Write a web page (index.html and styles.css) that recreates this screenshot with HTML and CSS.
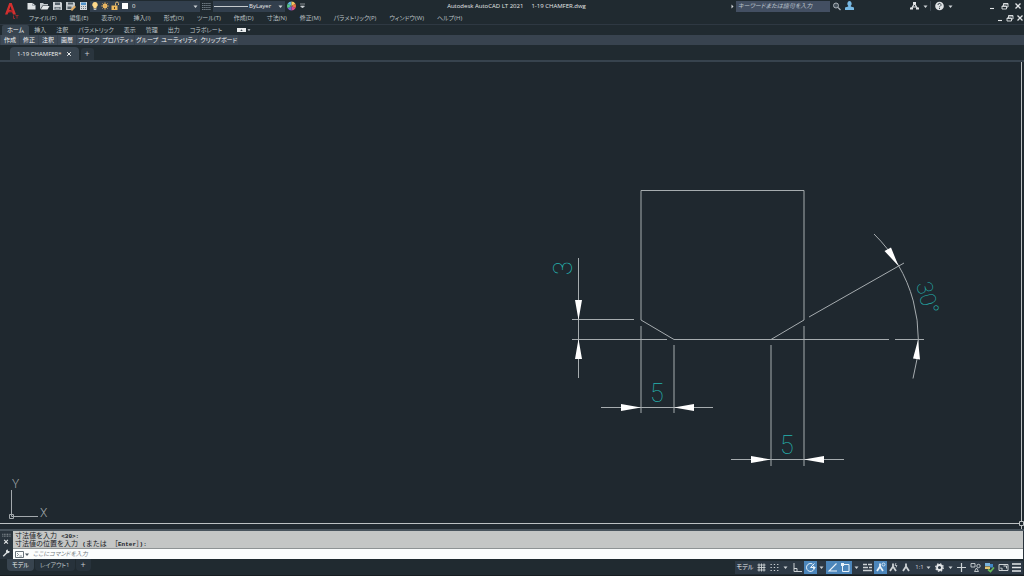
FILE: index.html
```html
<!DOCTYPE html>
<html lang="ja">
<head>
<meta charset="utf-8">
<title>Autodesk AutoCAD LT 2021 1-19 CHAMFER.dwg</title>
<link rel="stylesheet" href="styles.css">
</head>
<body class="app">
<svg class="defs" aria-hidden="true">
  <symbol id="caret" viewBox="0 0 5 5"><path d="M0.5 1.5h4L2.5 4z" fill="currentColor"/></symbol>
  <symbol id="min" viewBox="0 0 8 8"><path d="M2 6.500h4" stroke="currentColor" stroke-width="1.100"/></symbol>
  <symbol id="restore" viewBox="0 0 8 8"><path d="M1 4h4.500v3H1zM2.500 4V1.500h4.500v3.500H5.500M2.500 2h4.500M1 4.400h4.500" fill="none" stroke="currentColor" stroke-width=".9"/></symbol>
  <symbol id="close" viewBox="0 0 8 8"><path d="M1.500 1.500l5 5M6.500 1.500l-5 5" stroke="currentColor" stroke-width="1.300"/></symbol>
  <symbol id="anno" viewBox="0 0 10 10"><path d="M5 1.500v4M5 4.500L2 9M5 4.500L8 9" fill="none" stroke="currentColor" stroke-width="1.800"/></symbol>
</svg>

<header class="header">
  <button class="logo" aria-label="アプリケーションメニュー">
    <svg viewBox="0 0 24 24"><path d="M5 14.500L9.300 3h2.400L16 14.500h-3l-.8-2.300H8.500L7.500 14.500zM9.200 10h2.500L10.500 6z" fill="#d3302f" fill-rule="evenodd"/><path d="M5 14.500l7-5 1 2-5 1z" fill="#a81f24"/><path d="M13.500 15.500v3h1.500M15.500 15.500h3M17 15.500v3" fill="none" stroke="#a32a2e" stroke-width=".9"/></svg>
  </button>
  <div class="header-rows">
    <div class="title-row">
      <div class="quick">
        <button class="tool" aria-label="新規作成"><svg viewBox="0 0 13 12"><path d="M2.500 3h5l3 2.500V9.500h-8z" fill="#dfe3e5"/><path d="M7.500 3v2.500h3" fill="none" stroke="#8b949b" stroke-width=".7"/></svg></button>
        <button class="tool" aria-label="開く"><svg viewBox="0 0 13 12"><path d="M2 9.500V3h3l1 1h4v1.500H4.500z" fill="#c5cacd"/><path d="M4.800 6h6.700L9.500 9.500H2.800z" fill="#e5e8e9"/></svg></button>
        <button class="tool" aria-label="上書き保存"><svg viewBox="0 0 13 12"><path d="M2 2h8l1 1v7H2z" fill="#cdd2d5"/><path d="M4 2.500h5v2.500H4zM3.500 7h6v2.500h-6z" fill="#56626b"/><path d="M4.500 8.200h4" stroke="#cdd2d5"/></svg></button>
        <button class="tool" aria-label="名前を付けて保存"><svg viewBox="0 0 13 12"><path d="M2 2h8l1 1v4L8 10H2z" fill="#c2c8cb"/><path d="M4 2.500h5v2H4zM3.500 6.500h4v2.500h-4z" fill="#56626b"/><path d="M6.500 9.500l4-4 1.500 1.500-4 4z" fill="#e0ab62"/></svg></button>
        <button class="tool" aria-label="印刷"><svg viewBox="0 0 13 12"><path d="M3 2h7v8H3z" fill="#d4d9dc"/><path d="M4 2.500h5v2.500H4z" fill="#4f92c9"/><path d="M4 6.500h5M4 8.500h5" stroke="#6b7780" stroke-dasharray="1 1"/></svg></button>
      </div>
      <label class="combo combo-layer">
        <svg class="ic10" viewBox="0 0 10 12"><path d="M5 2a2.700 2.700 0 0 1 1.500 5v1.500h-3V7A2.700 2.700 0 0 1 5 2z" fill="#ffd98a"/><path d="M3.700 9.400h2.600" stroke="#b8bdc1" stroke-width="1.200"/></svg>
        <svg class="ic10" viewBox="0 0 10 12"><circle cx="5" cy="6" r="2.400" fill="#f5c268"/><path d="M5 2v8M1 6h8M2.200 3.200l5.600 5.600M7.800 3.200L2.200 8.800" stroke="#dcab5c" stroke-width=".7"/></svg>
        <svg class="ic10" viewBox="0 0 10 12"><path d="M1.500 5.500h6V10h-6z" fill="#eeb95c"/><path d="M5.500 5.500V3.500a1.500 1.500 0 0 1 3 0V5" fill="none" stroke="#e5bd76"/><path d="M4.500 7v2" stroke="#5a4a2c"/></svg>
        <svg class="ic10" viewBox="0 0 10 12"><path d="M2 3h6v6H2z" fill="#fff"/></svg>
        <select class="select" aria-label="画層"><option>0</option></select>
        <svg class="caret"><use href="#caret"/></svg>
      </label>
      <button class="tool" aria-label="線種"><svg viewBox="0 0 13 12"><path d="M2 3.500h9M2 5.500h9M2 7.500h9M2 9.500h9" stroke="#707c85" stroke-dasharray="1.500 .6"/></svg></button>
      <label class="combo combo-line">
        <span class="line-sample"></span>
        <select class="select" aria-label="線種の選択"><option>ByLayer</option></select>
        <svg class="caret"><use href="#caret"/></svg>
      </label>
      <button class="tool" aria-label="色"><svg viewBox="0 0 13 12"><path d="M6.500 6V1.500A4.500 4.500 0 0 0 2.600 3.800z" fill="#5fb4dd"/><path d="M6.500 6V1.500a4.500 4.500 0 0 1 3.900 2.300z" fill="#f2c45b"/><path d="M6.500 6l3.900-2.200a4.500 4.500 0 0 1 0 4.500z" fill="#ec7147"/><path d="M6.500 6l3.900 2.300a4.500 4.500 0 0 1-3.900 2.200z" fill="#d94d8c"/><path d="M6.500 6v4.500a4.500 4.500 0 0 1-3.900-2.200z" fill="#7563cf"/><path d="M6.500 6L2.600 8.300a4.500 4.500 0 0 1 0-4.500z" fill="#56c48c"/></svg></button>
      <button class="tool tool-narrow" aria-label="カスタマイズ"><svg viewBox="0 0 9 12"><path d="M2 4h5M2.500 6h4L4.500 8z" fill="#cdd2d5" stroke="#cdd2d5" stroke-width=".6"/></svg></button>
      <h1 class="title"><span>Autodesk AutoCAD LT 2021</span><span>1-19 CHAMFER.dwg</span></h1>
      <div class="search">
        <svg class="caret"><path d="M1.500 .5v4l2-2z" fill="#d5d9db"/></svg>
        <input class="search-box" type="search" aria-label="検索" placeholder="キーワードまたは語句を入力">
        <button class="tool" aria-label="検索実行"><svg viewBox="0 0 13 12"><circle cx="6" cy="5.500" r="2.500" fill="#46525b" stroke="#aab2b7"/><path d="M8 7.500l2.500 2.500" stroke="#aab2b7" stroke-width="1.200"/></svg></button>
        <button class="tool" aria-label="サインイン"><svg viewBox="0 0 13 12"><path d="M6.500 1a2.400 2.700 0 0 1 1.300 4.800v.8l3.200 1V10H2V7.600l3.200-1v-.8A2.400 2.700 0 0 1 6.500 1z" fill="#78b9e4"/></svg></button>
      </div>
      <div class="help">
        <button class="tool" aria-label="App Store"><svg viewBox="0 0 13 12"><path d="M6.500 3.500L3.500 8.500M6.500 3.500l3 5M4.500 7h4" fill="none" stroke="#e1e4e6" stroke-width="1.200"/><path d="M5 2h3v2.500H5zM2 7.500h3v2H2zM8 7.500h3v2H8z" fill="#e1e4e6"/></svg></button>
        <svg class="caret"><use href="#caret"/></svg>
        <span class="divider"></span>
        <button class="tool" aria-label="ヘルプ"><svg viewBox="0 0 13 12"><circle cx="6.500" cy="6" r="4.300" fill="#dfe3e5"/><path d="M5 5a1.500 1.500 0 1 1 2.200 1.200c-.6.300-.7.500-.7 1M6.500 8v1" fill="none" stroke="#3b464e"/></svg></button>
        <svg class="caret"><use href="#caret"/></svg>
      </div>
      <div class="window-buttons">
        <button class="tool" aria-label="最小化"><svg class="ic8"><use href="#min"/></svg></button>
        <button class="tool" aria-label="元に戻す"><svg class="ic8"><use href="#restore"/></svg></button>
        <button class="tool" aria-label="閉じる"><svg class="ic8"><use href="#close"/></svg></button>
      </div>
    </div>
    <div class="menu-row">
      <nav class="menu" aria-label="メニュー">
        <button>ファイル(F)</button><button>編集(E)</button><button>表示(V)</button><button>挿入(I)</button><button>形式(O)</button><button>ツール(T)</button><button>作成(D)</button><button>寸法(N)</button><button>修正(M)</button><button>パラメトリック(P)</button><button>ウィンドウ(W)</button><button>ヘルプ(H)</button>
      </nav>
      <div class="doc-buttons">
        <button aria-label="図面を最小化"><svg class="ic8"><use href="#min"/></svg></button>
        <button aria-label="図面を元に戻す"><svg class="ic8"><use href="#restore"/></svg></button>
        <button aria-label="図面を閉じる"><svg class="ic8"><use href="#close"/></svg></button>
      </div>
    </div>
  </div>
</header>

<nav class="ribbon-tabs" aria-label="リボン">
  <button class="active">ホーム</button><button>挿入</button><button>注釈</button><button>パラメトリック</button><button>表示</button><button>管理</button><button>出力</button><button>コラボレート</button>
  <button class="ribbon-toggle" aria-label="リボンの最小化"><svg viewBox="0 0 14 8"><path d="M0 2h9v4H0z" fill="#e8ebec"/><path d="M3.300 5h2.400L4.500 3.300z" fill="#38444f"/><path d="M10.500 3.300h3L12 5z" fill="#cdd2d5"/></svg></button>
</nav>
<nav class="panels" aria-label="パネル">
  <button>作成</button><button>修正</button><button>注釈</button><button>画層</button><button class="kana">ブロック</button><button class="kana">プロパティ <span class="arrow">»</span></button><button class="kana">グループ</button><button class="kana">ユーティリティ</button><button class="kana">クリップボード</button>
</nav>

<div class="doc-tabs">
  <button class="doc-tab">1-19 CHAMFER* <svg class="ic6" viewBox="0 0 8 8"><use href="#close"/></svg></button>
  <button class="add doc-add" aria-label="新規図面">+</button>
</div>

<main class="canvas">
  <svg class="drawing" viewBox="0 62 1024 467" role="img" aria-label="面取り図面">
    <g class="edge">
      <path d="M641 320V190.500H804V320L771 339.500H674L641 320"/>
      <path d="M572 319.500H634M572 339.500H667M771 339.500H889M895 339.500H924M809 317L904 263"/>
      <path d="M578.500 258V378M641 326V413M674 345V413M601 407.500H713"/>
      <path d="M771 345V466M804 326V466M731 459.500H844"/>
      <path d="M874 234A147 147 0 0 1 913 378.500"/>
    </g>
    <g class="arrowheads">
      <path d="M575 300h7l-3.500 20zM575 359h7l-3.500-20z"/>
      <path d="M621 404v7l20-3.500zM694 404v7l-20-3.500z"/>
      <path d="M751 456v7l20-3.500zM824 456v7l-20-3.500z"/>
      <path d="M884.500 251l6.500-3.500 7.500 18.500zM913 358.500l7 1-2-19.500z"/>
    </g>
    <g class="dims">
      <text transform="translate(572 275) rotate(-90)">3</text>
      <text x="650" y="402">5</text>
      <text x="780" y="454">5</text>
      <text class="angle" transform="translate(916 284) rotate(75)">30°</text>
    </g>
    <g class="ucs">
      <path d="M11.500 490V516.500H38M9.500 514.500h4v4h-4z"/>
      <text x="12" y="488">Y</text>
      <text x="40" y="517">X</text>
    </g>
    <path class="crosshair" d="M0 523.500H1019M1021.500 62V521M1021.500 526V529M1019.500 521.500h4v4h-4z"/>
  </svg>
</main>

<section class="command" aria-label="コマンドライン">
  <div class="command-side">
    <svg viewBox="0 0 13 30"><path d="M2 3.500h9M2 5.500h9" stroke="#9ba3a8" stroke-dasharray="1 .7"/><path d="M4 9.500l4 4M8 9.500l-4 4" stroke="#e6e9ea" stroke-width="1.200"/><path d="M3 27l4-4" stroke="#dfe3e5" stroke-width="1.500"/><path d="M9.800 21.300A2 2 0 1 1 8 19.800V21.500z" fill="#dfe3e5"/></svg>
  </div>
  <div class="command-main">
    <div class="history"><p>寸法値を入力 <code>&lt;30&gt;:</code></p><p>寸法値の位置を入力 <code>(</code>または ［<code>Enter</code>］<code>):</code></p></div>
    <label class="prompt">
      <svg class="prompt-icon" viewBox="0 0 18 9"><path d="M2.500 1.500h8v6h-8z" fill="none" stroke="#68737b"/><path d="M4 3l1.500 1.500L4 6M6.500 6h2.500" fill="none" stroke="#68737b" stroke-width=".8"/><path d="M12 3.500h4L14 6z" fill="#4c565e"/></svg>
      <input class="prompt-box" type="text" aria-label="コマンド" placeholder="ここにコマンドを入力">
    </label>
  </div>
</section>

<footer class="footer">
  <nav class="layouts" aria-label="レイアウト"><button class="active">モデル</button><button>レイアウト1</button><button class="add" aria-label="レイアウトを追加">+</button></nav>
  <div class="status">
    <button class="w20 space">モデル</button>
    <button aria-label="グリッド"><svg viewBox="0 0 13 13"><path d="M4 2.500v8M6.500 2.500v8M9 2.500v8M2.500 4h8M2.500 6.500h8M2.500 9h8" stroke="currentColor" stroke-width=".9"/></svg></button>
    <button aria-label="スナップ"><svg viewBox="0 0 13 13"><path d="M2.500 3.500h8M2.500 6.500h8M2.500 9.500h8" stroke="currentColor" stroke-width="1.200" stroke-dasharray="1.300 2"/></svg></button>
    <button class="w9" aria-label="スナップ設定"><svg class="caret"><use href="#caret"/></svg></button>
    <button class="w14" aria-label="直交モード"><svg viewBox="0 0 13 13"><path d="M3 2v8.500h8M3 7.500h3v3" fill="none" stroke="currentColor"/></svg></button>
    <button class="on" aria-label="極トラッキング"><svg viewBox="0 0 13 13"><path d="M10.500 6.500a4 4 0 1 1-2-3.500M6.500 6.500h5M6.500 6.500l4-4M9 8l2-1.500L9 5" fill="none" stroke="currentColor"/></svg></button>
    <button class="w9" aria-label="極トラッキング設定"><svg class="caret"><use href="#caret"/></svg></button>
    <button class="on" aria-label="オブジェクト スナップ トラッキング"><svg viewBox="0 0 13 13"><path d="M10.500 2.500L3 10h8" fill="none" stroke="currentColor" stroke-width="1.100"/></svg></button>
    <button class="on" aria-label="オブジェクト スナップ"><svg viewBox="0 0 13 13"><path d="M3.500 3.500h6.500v7H3.500z" fill="none" stroke="currentColor"/><path d="M2 2h3v3H2z" fill="currentColor"/></svg></button>
    <button class="w9" aria-label="オブジェクト スナップ設定"><svg class="caret"><use href="#caret"/></svg></button>
    <button aria-label="線の太さ"><svg viewBox="0 0 13 13"><path d="M2 3.500h4M7 3.500h4M2 6.500h5M8 6.500h3M2 9.500h9" stroke="currentColor" stroke-width="1.700"/></svg></button>
    <button class="on" aria-label="注釈オブジェクト"><svg viewBox="0 0 13 13"><use href="#anno" x="1" y="1" width="10" height="10"/><circle cx="9.500" cy="3.500" r="1.500" fill="none" stroke="currentColor" stroke-width=".8"/></svg></button>
    <button aria-label="注釈尺度の追加"><svg viewBox="0 0 13 13"><use href="#anno" x="1" y="1" width="10" height="10"/><path d="M9 2l-1 2.500h2L9 6.500" fill="none" stroke="currentColor" stroke-width=".8"/></svg></button>
    <button aria-label="注釈尺度"><svg viewBox="0 0 13 13"><use href="#anno" x="1" y="1" width="10" height="10"/></svg></button>
    <button class="w20">1:1 <svg class="caret"><use href="#caret"/></svg></button>
    <button aria-label="ワークスペース"><svg viewBox="0 0 13 13"><circle cx="6.500" cy="6.500" r="2.500" fill="none" stroke="#e4e7e9" stroke-width="1.800"/><circle cx="6.500" cy="6.500" r="3.800" fill="none" stroke="#e4e7e9" stroke-width="1.200" stroke-dasharray="1.500 1.480"/></svg></button>
    <button class="w9" aria-label="ワークスペース切り替え"><svg class="caret"><use href="#caret"/></svg></button>
    <button aria-label="注釈モニター"><svg viewBox="0 0 13 13"><path d="M6.500 2v9M2 6.500h9" stroke="currentColor" stroke-width="1.200"/></svg></button>
    <button class="w14" aria-label="選択表示"><svg viewBox="0 0 13 13"><path d="M2 2.500h4v3.500H2zM5.500 10.500l2-3.500 2 3.500z" fill="none" stroke="currentColor" stroke-width=".9"/><circle cx="9.500" cy="5" r="1.700" fill="none" stroke="currentColor" stroke-width=".9"/></svg></button>
    <button class="w14" aria-label="グラフィックス"><svg viewBox="0 0 13 13"><path d="M2 2h5v3H2z" fill="#78b4df"/><path d="M2 5.500h5v2.500H2z" fill="#e3c673"/><path d="M7 3h3v3.500H7z" fill="#4188c6"/><path d="M5 8.500l2.500 2L11 6.500" fill="none" stroke="#67b75a" stroke-width="1.700"/></svg></button>
    <button class="w14" aria-label="フルスクリーン"><svg viewBox="0 0 13 13"><path d="M2 3.500h9v6H2z" fill="none" stroke="currentColor"/><path d="M6.500 5h3v2.500M4 6.500v1.500h2" fill="none" stroke="currentColor"/></svg></button>
    <button aria-label="カスタマイズ"><svg viewBox="0 0 13 13"><path d="M2 3h9M2 6.500h9M2 10h9" stroke="#e4e7e9" stroke-width="1.300"/></svg></button>
  </div>
</footer>
</body>
</html>
```
FILE: styles.css
```css
* { box-sizing: border-box; }

.app {
  margin: 0;
  height: 100vh;
  display: flex;
  flex-direction: column;
  overflow: hidden;
  background: #202a30;
  color: #bcc2c6;
  font: 6px/10px "Open Sans", "Noto Sans CJK JP", sans-serif;
  font-feature-settings: "palt";
}

.defs { position: absolute; width: 0; height: 0; }

button, input, select {
  margin: 0;
  padding: 0;
  border: 0;
  border-radius: 0;
  background: none;
  color: inherit;
  font: inherit;
  font-feature-settings: inherit;
  white-space: nowrap;
}

svg { display: block; flex: none; }
.caret { width: 5px; height: 5px; color: #cdd2d5; }
.ic6 { width: 6px; height: 6px; }
.ic8 { width: 8px; height: 8px; }
.ic10 { width: 10px; height: 12px; }

/* Header */
.header { display: flex; height: 25px; border-bottom: 1px solid #2e3842; }
.logo { width: 25px; }
.logo svg { width: 24px; height: 24px; }
.header-rows { flex: 1; min-width: 0; }
.title-row { display: flex; align-items: center; height: 12px; }
.quick, .search, .help, .window-buttons { display: flex; align-items: center; }
.tool { display: flex; align-items: center; justify-content: center; width: 13px; height: 12px; }
.tool > svg:not(.ic8) { width: 13px; height: 12px; }
.tool.tool-narrow { width: 9px; }
.tool.tool-narrow > svg { width: 9px; }

.combo { display: flex; align-items: center; height: 11px; padding-right: 2px; background: #323f4d; color: #e8ebec; }
.combo-layer { width: 110px; }
.combo-line { width: 72px; }
.select { appearance: none; flex: 1; min-width: 0; height: 11px; padding-left: 2px; }
.combo-line .select { padding-left: 1px; }
.line-sample { width: 34px; height: 1px; margin-left: 1px; background: #c5cacd; }

.title { flex: 1; display: flex; justify-content: center; gap: 8px; margin: 0; padding-right: 4px; font-size: 6px; font-weight: 400; color: #e4e7e8; white-space: nowrap; }
.search-box { width: 94px; height: 11px; margin-left: 1px; padding: 0 2px; background: #434f62; color: #e1e4e6; }
.search-box::placeholder, .prompt-box::placeholder { font-style: italic; opacity: 1; }
.search-box::placeholder { color: #bcc4cd; }
.help { gap: 2px; margin-left: 52px; }
.divider { width: 1px; height: 10px; background: #3a454e; }
.window-buttons { margin-left: 32px; color: #e1e4e6; }

.menu-row { display: flex; justify-content: space-between; align-items: center; height: 12px; }
.menu { display: flex; gap: 13px; padding-left: 4px; }
.doc-buttons { display: flex; gap: 2px; color: #e1e4e6; }

/* Ribbon */
.ribbon-tabs { display: flex; height: 10px; padding-left: 2px; }
.ribbon-tabs button { padding: 0 5px; }
.ribbon-tabs .active { background: #38444f; color: #eef0f1; border-radius: 2px 2px 0 0; }
.ribbon-tabs .ribbon-toggle { padding: 0 10px; }
.ribbon-toggle svg { width: 14px; height: 8px; }
.panels { display: flex; gap: 1px; height: 10px; padding-left: 1px; background: #38434f; color: #eef0f1; }
.panels button { padding: 0 3px; background: #3e4a57; }
.panels .kana { padding: 0 1px; }
.arrow { font-size: 5px; }

/* Drawing tabs */
.doc-tabs { display: flex; align-items: end; gap: 2px; height: 17px; padding-left: 10px; border-bottom: 2px solid #37434e; }
.doc-tab { display: flex; align-items: center; gap: 4px; height: 13px; padding: 0 7px; border-radius: 4px 4px 0 0; background: #38444f; color: #eef0f1; }
.add { color: #c3c9cc; font-size: 9px; }
.doc-add { width: 13px; height: 12px; border-radius: 3px 3px 0 0; background: #2a353e; }

/* Canvas */
.canvas { flex: 1; min-height: 0; background: #1f282f; }
.drawing { width: 100%; height: 100%; }
.edge { fill: none; stroke: #a6acaf; stroke-width: 1; }
.arrowheads { fill: #fff; }
.dims { fill: #25b3af; font: 100 25px Roboto, sans-serif; }
.angle { font-size: 22px; }
.ucs { fill: none; stroke: #a3a9ad; }
.ucs text { fill: #a3a9ad; stroke: none; font: 300 12px Roboto, sans-serif; }
.crosshair { fill: none; stroke: #bcc1c3; }

/* Command line */
.command { display: flex; border-top: 2px solid #48535c; padding-right: 1px; background: #2a343d; }
.command-side { width: 13px; }
.command-side svg { width: 13px; height: 28px; }
.command-main { flex: 1; min-width: 0; }
.history { height: 18px; padding: 1px 2px; border-bottom: 1px solid #8e9394; background: #c4c6c5; color: #182024; font: 7px/8px "Liberation Mono", "Noto Sans CJK JP", monospace; }
.history p { height: 8px; margin: 0; }
.history code { font: 6px/1 "Liberation Mono", monospace; font-weight: 700; }
.prompt { display: flex; align-items: center; height: 10px; background: #fbfdfd; }
.prompt-icon { width: 18px; height: 9px; }
.prompt-box { flex: 1; min-width: 0; padding-left: 2px; color: #20272b; }
.prompt-box::placeholder { color: #747b80; }

/* Footer */
.footer { display: flex; justify-content: space-between; height: 17px; padding-right: 1px; border-bottom: 1px solid #171d21; }
.layouts { display: flex; gap: 1px; height: 12px; padding-left: 7px; }
.layouts button { padding: 0 5px; border-radius: 0 0 4px 4px; background: #27323b; }
.layouts .active { background: #38444f; color: #eef0f1; }
.status { display: flex; align-items: center; color: #cdd2d5; }
.status button { display: flex; align-items: center; justify-content: center; gap: 2px; width: 13px; height: 13px; background: #2d3945; }
.status svg:not(.caret) { width: 13px; height: 13px; }
.status .w9 { width: 9px; }
.status .w14 { width: 14px; }
.status .w20 { width: 20px; }
.status .space { color: #eef0f1; }
.status .on { background: #4c86bb; color: #e9f2f9; }
```
